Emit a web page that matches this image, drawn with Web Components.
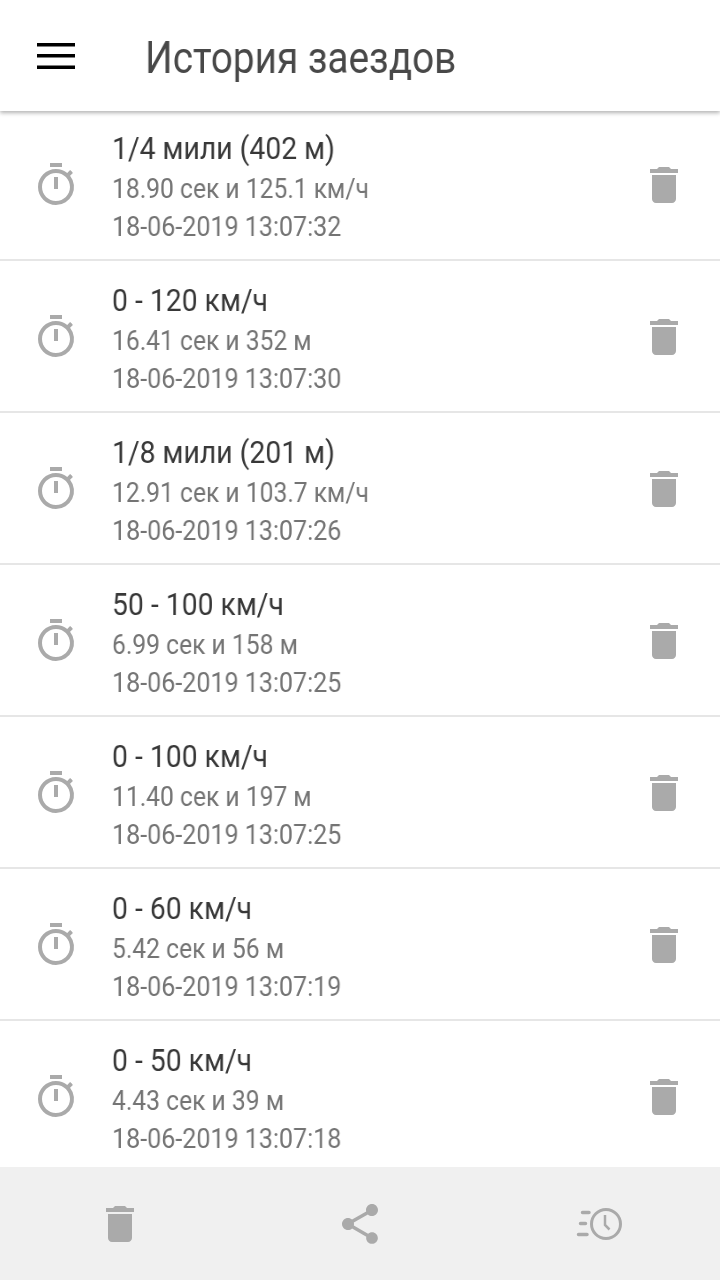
<!DOCTYPE html>
<html lang="ru"><head><meta charset="utf-8"><style>
html,body{margin:0;padding:0;background:#fff}
body{width:720px;height:1280px;overflow:hidden;font-family:Roboto,sans-serif}
</style></head><body>
<history-app>
<run-row title="1/4 мили (402 м)" result="18.90 сек и 125.1 км/ч" date="18-06-2019 13:07:32"></run-row>
<run-row title="0 - 120 км/ч" result="16.41 сек и 352 м" date="18-06-2019 13:07:30"></run-row>
<run-row title="1/8 мили (201 м)" result="12.91 сек и 103.7 км/ч" date="18-06-2019 13:07:26"></run-row>
<run-row title="50 - 100 км/ч" result="6.99 сек и 158 м" date="18-06-2019 13:07:25"></run-row>
<run-row title="0 - 100 км/ч" result="11.40 сек и 197 м" date="18-06-2019 13:07:25"></run-row>
<run-row title="0 - 60 км/ч" result="5.42 сек и 56 м" date="18-06-2019 13:07:19"></run-row>
<run-row title="0 - 50 км/ч" result="4.43 сек и 39 м" date="18-06-2019 13:07:18"></run-row>
</history-app>
<script>
const TRASH='<svg viewBox="0 0 24 24" width="48" height="48" fill="#aaa"><path d="M6 19c0 1.100.9 2 2 2h8c1.100 0 2-.9 2-2V7H6v12zM19 4h-3.500l-1-1h-5l-1 1H5v2h14V4z"/></svg>';
const WATCH='<svg viewBox="0 0 24 24" width="48" height="48" fill="#aaa"><path d="M15 1H9v2h6V1zm-4 13h2V8h-2v6zm8.030-6.610l1.420-1.420c-.43-.51-.9-.99-1.410-1.410l-1.420 1.420A8.962 8.962 0 0 0 12 4c-4.970 0-9 4.030-9 9s4.020 9 9 9a8.994 8.994 0 0 0 7.030-14.610zM12 20c-3.870 0-7-3.130-7-7s3.130-7 7-7 7 3.130 7 7-3.130 7-7 7z"/></svg>';
class RunRow extends HTMLElement{
 connectedCallback(){
  const s=this.attachShadow({mode:'open'});
  s.innerHTML=`<style>
  :host{display:flex;align-items:center;box-sizing:border-box;height:152px;border-bottom:2px solid #e6e6e6}
  .ic{width:112px;display:flex;justify-content:center}
  .ic svg{display:block;margin-top:2px}
  .txt{flex:1;min-width:0;display:flex;flex-direction:column;padding-top:7px}
  .t{font-size:32px;line-height:38px;color:#383838;transform:scaleX(.885);transform-origin:0 50%;white-space:nowrap;margin-bottom:3px;will-change:transform}
  .s{font-size:28px;line-height:38px;color:#747474;transform:scaleX(.88);transform-origin:0 50%;white-space:nowrap;will-change:transform}
  .d{transform:scaleX(.895)}
  .tr{width:112px;display:flex;justify-content:center}
  .tr svg{display:block;margin-top:2px}
  </style><div class="ic">${WATCH}</div><div class="txt"><div class="t"></div><div class="s r"></div><div class="s d"></div></div><div class="tr">${TRASH}</div>`;
  s.querySelector('.t').textContent=this.getAttribute('title');
  s.querySelector('.r').textContent=this.getAttribute('result');
  s.querySelector('.d').textContent=this.getAttribute('date');
 }
}
class HistoryApp extends HTMLElement{
 connectedCallback(){
  const s=this.attachShadow({mode:'open'});
  s.innerHTML=`<style>
  :host{display:flex;flex-direction:column;height:1280px;position:relative}
  header{height:111px;flex:none;display:flex;align-items:center;background:#fff;box-shadow:0 2px 4px rgba(0,0,0,.3);position:relative;z-index:1}
  .menu{width:112px;display:flex;justify-content:center}
  h1{margin:4px 0 0 33px;font-weight:400;font-size:44px;color:#484848;transform:scaleX(.88);transform-origin:0 50%;white-space:nowrap;will-change:transform}
  main{flex:1;overflow:hidden;margin-top:-2px}
  footer{height:113px;flex:none;background:#f0f0f0;display:flex;align-items:center}
  footer div{width:240px;display:flex;justify-content:center}
  footer svg{display:block}
  </style>
  <header><div class="menu"><svg width="38" height="26" viewBox="0 0 38 26" fill="#000"><rect width="38" height="3.500" y="0"/><rect width="38" height="3.500" y="11"/><rect width="38" height="3.500" y="22.500"/></svg></div><h1>История заездов</h1></header>
  <main><slot></slot></main>
  <footer><div>${TRASH}</div><div><svg viewBox="0 0 24 24" width="48" height="48" fill="#aaa"><path d="M18 16.080c-.76 0-1.440.3-1.960.77L8.910 12.700c.05-.23.09-.46.09-.7s-.04-.47-.09-.7l7.050-4.110c.54.5 1.250.81 2.040.81 1.660 0 3-1.340 3-3s-1.340-3-3-3-3 1.340-3 3c0 .24.04.47.09.7L8.040 9.810C7.500 9.310 6.790 9 6 9c-1.660 0-3 1.340-3 3s1.340 3 3 3c.79 0 1.500-.31 2.040-.81l7.120 4.160c-.05.21-.08.43-.08.65 0 1.610 1.310 2.920 2.920 2.920s2.920-1.310 2.920-2.920-1.310-2.920-2.920-2.920z"/></svg></div><div><svg viewBox="0 0 48 36" width="48" height="36" fill="none" stroke="#aaa"><circle cx="30" cy="18" r="14.500" stroke-width="3"/><path d="M29 9v10l4.500 4.500" stroke-width="2.500"/><path d="M6.500 6.500h6.500M4.500 17.500h5M2.500 28.500h8.500" stroke-width="3.500" stroke-linecap="round"/></svg></div></footer>`;
 }
}
customElements.define('run-row',RunRow);
customElements.define('history-app',HistoryApp);
</script></body></html>
